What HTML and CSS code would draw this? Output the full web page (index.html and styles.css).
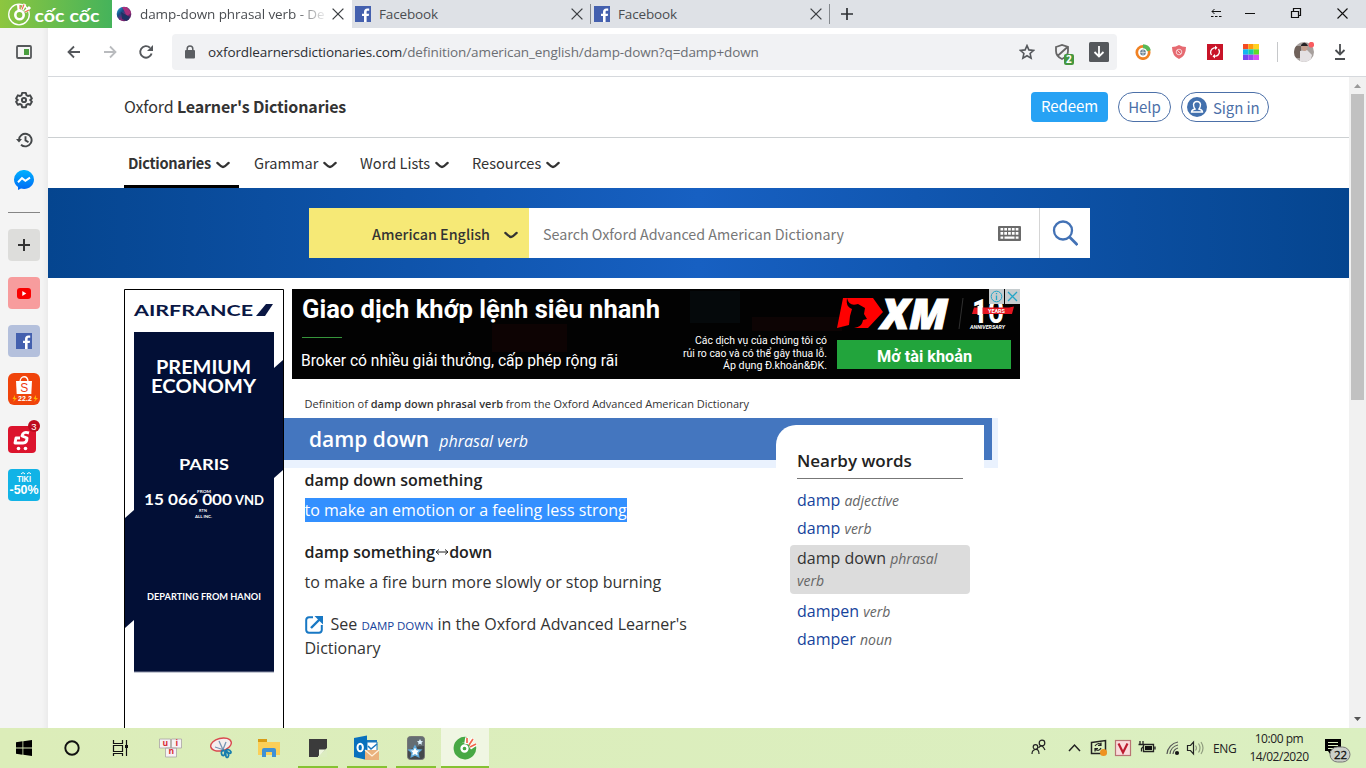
FILE: index.html
```html
<!DOCTYPE html>
<html lang="en">
<head>
<meta charset="utf-8">
<title>damp-down phrasal verb - Definition</title>
<link rel="stylesheet" href="styles.css">
</head>
<body>
<svg width="0" height="0" class="defs">
  <defs>
    <symbol id="close" viewBox="0 0 12 12"><path d="M.6.6 11.4 11.4M11.4.6.6 11.4" fill="none" stroke="#3c3f43" stroke-width="1.3"/></symbol>
    <symbol id="fb" viewBox="0 0 16 16"><path fill="#4460ae" d="M0 0h16v16H0z"/><path fill="#fff" d="M9 16V10H7V7.7h2V6c0-2.300 1.300-3.500 3.300-3.500h1.900v2.200h-1.300c-1 0-1.300.500-1.300 1.300v1.700h2.500l-.4 2.300h-2.100v6z"/></symbol>
    <symbol id="chev" viewBox="0 0 14 8"><path d="M1.500 2Q5.300 5.900 7 5.900T12.500 2" fill="none" stroke="#333" stroke-width="2.500" stroke-linecap="round"/></symbol>
    <linearGradient id="gMsg" x2="0" y2="1"><stop stop-color="#00b2ff"/><stop offset="1" stop-color="#0068f5"/></linearGradient>
    <linearGradient id="gOld" x2="1" y2="1"><stop stop-color="#30b5e8"/><stop offset=".35" stop-color="#174b83"/><stop offset=".6" stop-color="#8b2673"/><stop offset="1" stop-color="#2b205b"/></linearGradient>
  </defs>
</svg>

<header class="tabbar">
  <div class="brand">
    <svg width="112" height="28" viewBox="0 0 112 28">
      <circle cx="19" cy="14.500" r="10.300" fill="none" stroke="#fff" stroke-width="1.300"/>
      <circle cx="19.500" cy="15" r="4.200" fill="none" stroke="#fff" stroke-width="2.600"/>
      <path d="M19 10 18.500 4.500M22 10 25 4M25 12 30 7" stroke="#fff" stroke-width="3"/>
      <path d="M22 9.500 24 4.500M20 9V5M25 12 29 10" stroke="#ee6a4c" stroke-width="1.100"/>
      <text x="34.500" y="22" textLength="65" lengthAdjust="spacingAndGlyphs" class="brand-text">cốc cốc</text>
    </svg>
  </div>
  <div class="tab active">
    <svg class="fav" width="16" height="16" viewBox="0 0 16 16"><circle cx="8" cy="8" r="7.300" fill="url(#gOld)"/><path d="m6 1 5 0 4 6-4 3z" fill="#a9307c"/><path d="m5 6 9 5-3 4-5-2z" fill="#1d3264"/></svg>
    <span class="tab-title fade">damp-down phrasal verb - De</span>
    <svg class="x" width="12" height="12"><use href="#close"/></svg>
  </div>
  <div class="tab">
    <svg class="fav" width="16" height="16"><use href="#fb"/></svg><span class="tab-title">Facebook</span>
    <svg class="x" width="12" height="12"><use href="#close"/></svg>
  </div>
  <div class="tab">
    <svg class="fav" width="16" height="16"><use href="#fb"/></svg><span class="tab-title">Facebook</span>
    <svg class="x" width="12" height="12"><use href="#close"/></svg>
  </div>
  <svg class="newtab" width="12" height="12" viewBox="0 0 12 12"><path d="M6 0v12M0 6h12" stroke="#2e3134" stroke-width="1.700"/></svg>
  <div class="winctl">
    <svg width="160" height="28" viewBox="0 0 160 28" fill="none" stroke="#111">
      <path d="M12 11.500h9M14.500 9l-2.500 2.500 2.500 2.500"/><path d="M11 16.500h11" stroke-dasharray="2.500 1.500"/>
      <path d="M45 13.500h10"/>
      <path d="M91.500 11.500h7v6h-7zM93.500 11.500v-3h7v7h-2" stroke-width="1.200"/>
      <path d="m137.500 8.500 10 10M147.500 8.500l-10 10" stroke-width="1.100"/>
    </svg>
  </div>
</header>

<div class="window">
  <aside class="side">
    <svg class="tool" width="16" height="14" viewBox="0 0 16 14"><rect x="1" y="1" width="14" height="12" rx="1" fill="none" stroke="#55585a" stroke-width="1.800"/><path fill="#4a9e3f" d="M8 4h5v6H8z"/></svg>
    <svg class="tool gear" width="18" height="18" viewBox="0 0 24 24" fill="none" stroke="#444749" stroke-width="2.600" stroke-linejoin="round"><path d="M9.500 2.500h5l.7 3 2 1.200 3-.9 2.300 4.200-2.200 2 0 0 2.200 2.200-2.300 4.100-3-.9-2 1.200-.7 3h-5l-.7-3-2-1.200-3 .9L1.500 14.200 3.700 12 1.500 10l2.300-4.200 3 .9 2-1.200z"/><circle cx="12" cy="12" r="2.800"/></svg>
    <svg class="tool hist" width="17" height="16" viewBox="0 0 17 16" fill="none" stroke="#444749" stroke-width="1.900"><path d="M3 8a6.300 6.300 0 1 1 2 4.700M9.500 4.200V8.400l3 1.800"/><path d="M0 7h6L3 10.500z" fill="#444749" stroke="none"/></svg>
    <svg class="tool msg" width="20" height="20" viewBox="0 0 20 20"><path fill="url(#gMsg)" d="M10 0a9.700 9.700 0 0 1 10 9.500c0 5.500-4.800 9.600-10 9.500-1 0-2-.1-3-.4L4 20v-3C1.500 15.200 0 12.500 0 9.500A9.700 9.700 0 0 1 10 0z"/><path d="m4 12.300 4-4.200 3.400 2.700L16 7.700" fill="none" stroke="#fff" stroke-width="2"/></svg>
    <hr>
    <div class="tile grey"><svg width="12" height="12"><path d="M6 0v12M0 6h12" stroke="#333" stroke-width="2"/></svg></div>
    <div class="tile pink"><svg width="14" height="11"><rect width="14" height="11" rx="3" fill="#f90000"/><path d="m5.300 3 4 2.500-4 2.500z" fill="#fff"/></svg></div>
    <div class="tile bluish"><svg width="16" height="16"><use href="#fb"/></svg></div>
    <div class="tile shopee"><svg width="32" height="32"><path d="M8 8h16l-.7 13H8.700z" fill="#fff"/><path d="M12 9c0-7 8-7 8 0" fill="none" stroke="#fff" stroke-width="1.300"/><text x="12.300" y="19" font-size="12" fill="#ee3a12">S</text><text x="10" y="28" textLength="14" class="tiny-bold">22.2</text><path d="m7 22-2.500 4h2L5 29l4-4H7zM28 22l-2.500 4h2L26 29l4-4h-2z" fill="#ffb000"/></svg></div>
    <div class="tile sendo"><svg width="32" height="34"><rect y="7" width="28" height="27" rx="4" fill="#dc142d"/><path d="M21 14q-6-2-7 3l5 2q0 5-4 5H7l1-5h4" fill="none" stroke="#fff" stroke-width="2.900" stroke-linejoin="round"/><circle cx="10.500" cy="29.500" r="1.800" fill="#fff"/><circle cx="17.500" cy="29.500" r="1.800" fill="#fff"/><circle cx="26" cy="7" r="6" fill="#bd0b1e"/><text x="23.300" y="10.500" font-size="9.500" fill="#fff">3</text></svg></div>
    <div class="tile tiki"><svg width="32" height="32"><text x="9" y="13" textLength="14" lengthAdjust="spacingAndGlyphs" font-size="9.500" font-weight="700" fill="#fff">TIKI</text><path d="m13 5 2-1.500L17 5M19 5l2-1.500L23 5" fill="none" stroke="#fff"/><text x="1.500" y="25" textLength="29" lengthAdjust="spacingAndGlyphs" font-size="12" font-weight="700" fill="#fff">-50%</text></svg></div>
  </aside>

  <div class="browser">
    <div class="toolbar">
      <div class="cell"><svg width="14" height="14" viewBox="0 0 14 14"><path d="M13 7H2M7 1.500 1.500 7 7 12.500" fill="none" stroke="#55585c" stroke-width="1.800"/></svg></div>
      <div class="cell"><svg width="14" height="14" viewBox="0 0 14 14"><path d="M1 7h11M7 1.500 12.500 7 7 12.500" fill="none" stroke="#b9bbbe" stroke-width="1.800"/></svg></div>
      <div class="cell"><svg width="16" height="16" viewBox="0 0 16 16"><path d="M13.600 9.500A5.800 5.800 0 1 1 12 3.700" fill="none" stroke="#55585c" stroke-width="1.900"/><path d="M15 1v6H9z" fill="#55585c"/></svg></div>
      <div class="url">
        <svg width="12" height="14" viewBox="0 0 12 14"><rect x="1" y="5" width="10" height="8.500" rx="1" fill="#5b5e62"/><path d="M3.200 5.500V3.800a2.800 2.800 0 0 1 5.600 0v1.700" fill="none" stroke="#5b5e62" stroke-width="1.500"/></svg>
        <span class="address"><b>oxfordlearnersdictionaries.com</b>/definition/american_english/damp-down?q=damp+down</span>
        <div class="cell"><svg width="16" height="16" viewBox="0 0 16 16"><path d="m8 1.600 1.900 4.300 4.700.5-3.500 3.100 1 4.700L8 11.800l-4.100 2.400 1-4.700L1.400 6.400l4.700-.5z" fill="none" stroke="#55585c" stroke-width="1.600"/></svg></div>
        <div class="cell"><svg class="shield" width="22" height="24" viewBox="0 0 22 24"><path d="M3 4 9 2l6 2v4c0 4-2.500 6.500-6 8C5.500 14.500 3 12 3 8zM4.500 13 14.500 4" fill="none" stroke="#666" stroke-width="1.800"/><rect x="11" y="11" width="10" height="11" rx="2" fill="#45973f"/><text x="13" y="20.300" font-size="10" font-weight="700" fill="#fff">2</text></svg></div>
        <div class="cell"><svg width="20" height="20"><rect width="20" height="20" rx="1.500" fill="#55585c"/><path d="M10 4v10M5.500 10l4.500 4.500L14.500 10" fill="none" stroke="#fff" stroke-width="1.800"/></svg></div>
      </div>
      <div class="cell first"><svg width="16" height="16" viewBox="0 0 16 16"><circle cx="8" cy="8.500" r="6.200" fill="none" stroke="#f08224" stroke-width="2.700"/><path d="M8 2.200a6.200 6.200 0 0 1 5.900 4.500" fill="none" stroke="#58b957" stroke-width="4"/><circle cx="8" cy="8.500" r="2.900" fill="#6d8698"/><path d="M8 5.600v5.800M5.200 8.500h5.600" stroke="#d8dee2" stroke-width=".8"/></svg></div>
      <div class="cell"><svg width="14" height="14"><path d="M7 0q3 2 7 2Q14 11 7 14 0 11 0 2 4 2 7 0z" fill="#e66a71"/><circle cx="7" cy="7" r="2.800" fill="none" stroke="#f7cfd2"/><path d="m5 5 4 4" stroke="#f7cfd2"/></svg></div>
      <div class="cell"><svg width="16" height="16"><path fill="#c81428" d="M0 0h16v16H0z"/><path d="M4.500 11a4.600 4.600 0 0 1 2.500-7.200h2M11.500 5A4.600 4.600 0 0 1 9 12.200H7" fill="none" stroke="#fff" stroke-width="1.300"/><path d="M8 1.600 10.500 3.800 8 6zM8 10v4.400L5.500 12.200z" fill="#fff"/></svg></div>
      <div class="cell"><svg width="16" height="16"><path fill="#f44b23" d="M0 0h5.300v5.300H0z"/><path fill="#ff9a0a" d="M5.300 0h5.400v5.300H5.300z"/><path fill="#ffd21f" d="M10.700 0H16v5.300h-5.300z"/><path fill="#12b8ef" d="M0 5.300h5.300v5.400H0z"/><path fill="#15cda3" d="M5.300 5.300h5.400v5.400H5.300z"/><path fill="#63d928" d="M10.700 5.300H16v5.400h-5.300z"/><path fill="#7447f0" d="M0 10.700h5.300V16H0z"/><path fill="#9b45f1" d="M5.300 10.700h5.400V16H5.300z"/><path fill="#d74cf6" d="M10.700 10.700H16V16h-5.300z"/></svg></div>
      <i class="vsep"></i>
      <div class="cell"><svg width="20" height="20" viewBox="0 0 20 20"><clipPath id="av"><circle cx="10" cy="10" r="10"/></clipPath><g clip-path="url(#av)"><path fill="#a7a09d" d="M0 0h20v20H0z"/><path fill="#70625b" d="M0 4h7v12H0z"/><path fill="#e4e1e3" d="m6 9 7-1 5 5-2 7H6z"/><ellipse cx="10.500" cy="5" rx="3" ry="4" fill="#c49f8e"/><path fill="#252326" d="M7 3q4-5 7 1H7z"/></g><circle cx="17.300" cy="2.700" r="2.800" fill="#fa5c60"/></svg></div>
      <div class="cell"><svg width="12" height="16"><path d="M6 0v10M1.500 6 6 10.500 10.500 6M1 15h10" fill="none" stroke="#4a4d50" stroke-width="1.800"/></svg></div>
    </div>

    <div class="viewport">
      <main class="page">
        <div class="masthead">
          <div class="logo">Oxford <b>Learner's Dictionaries</b></div>
          <span class="btn redeem">Redeem</span>
          <span class="btn pill help">Help</span>
          <span class="btn pill sign"><svg width="20" height="20"><circle cx="10" cy="10" r="10" fill="#4270ad"/><path d="M4.500 15q0-2.200 3.500-3-1.500-2-1.500-4.500Q7 4.500 10 4.500t3.500 3Q13.500 10 12 12q3.500.800 3.500 3z" fill="none" stroke="#fff" stroke-width="1.400"/></svg>Sign in</span>
        </div>
        <nav class="menu">
          <a class="on">Dictionaries<svg width="14" height="8"><use href="#chev"/></svg></a>
          <a class="m2">Grammar<svg width="14" height="8"><use href="#chev"/></svg></a>
          <a class="m3">Word Lists<svg width="14" height="8"><use href="#chev"/></svg></a>
          <a class="m4">Resources<svg width="14" height="8"><use href="#chev"/></svg></a>
        </nav>
        <section class="search">
          <div class="lang">American English<svg width="14" height="8"><use href="#chev"/></svg></div>
          <div class="field"><span>Search Oxford Advanced American Dictionary</span>
            <svg width="23" height="15" viewBox="0 0 23 15"><rect width="23" height="15" rx="1" fill="#6a6a6a"/><path d="M2.500 3.300h18M2.500 7.400h18" stroke="#fff" stroke-width="2.600" stroke-dasharray="2.700 1.100"/><path d="M2.500 11.600h2.700M6.500 11.600h10M17.700 11.600h2.800" stroke="#fff" stroke-width="2.200"/></svg>
          </div>
          <div class="go"><svg width="26" height="26" viewBox="0 0 26 26"><circle cx="11" cy="10.500" r="9" fill="none" stroke="#4372b5" stroke-width="2.300"/><path d="m17.500 17 8 8" stroke="#4372b5" stroke-width="2.800"/></svg></div>
        </section>
        <div class="body">
          <svg class="skyscraper" width="160" height="439" viewBox="0 0 160 439">
            <path d="M.5 439V.5h159V439" fill="#fff" stroke="#000"/>
            <path fill="#020f36" d="M10 43h140v36l9-8v110l-9 8v194H10v-52l-9 8V229l9-8z"/>
            <path d="M10 383h140" stroke="#8c93a8"/>
            <g fill="#0a1744" font-weight="700" class="air"><text x="10" y="27" font-size="16" textLength="119" lengthAdjust="spacingAndGlyphs">AIRFRANCE</text></g>
            <path d="m132 27 10-12h7l-8 12z" fill="#0a1744"/>
            <g fill="#fff" class="air" font-weight="700">
              <text x="32" y="84.500" font-size="19" textLength="95" lengthAdjust="spacingAndGlyphs">PREMIUM</text>
              <text x="27" y="103.500" font-size="19" textLength="105" lengthAdjust="spacingAndGlyphs">ECONOMY</text>
              <text x="55" y="181" font-size="15.500" textLength="50" lengthAdjust="spacingAndGlyphs">PARIS</text>
              <text x="20" y="216" font-size="16" textLength="88" lengthAdjust="spacingAndGlyphs">15 066 000</text>
              <text x="111" y="216" font-size="12.500" textLength="29" lengthAdjust="spacingAndGlyphs">VND</text>
              <text x="23" y="311" font-size="9.500" textLength="114" lengthAdjust="spacingAndGlyphs">DEPARTING FROM HANOI</text>
              <g font-size="3.800"><text x="73" y="203.500" textLength="14" lengthAdjust="spacingAndGlyphs">FROM</text><text x="75" y="223" textLength="8">RTN</text><text x="71" y="228.500" textLength="17" lengthAdjust="spacingAndGlyphs">ALL INC.</text></g>
            </g>
          </svg>
          <div class="column">
            <svg class="banner" width="728" height="90" viewBox="0 0 728 90">
              <path fill="#020202" d="M0 0h728v90H0z"/>
              <path d="M200 35h75v28h-75z" fill="#0d0303"/><path d="M398 2h50v32h-50z" fill="#05090b"/><path d="M460 28h90v14h-90z" fill="#0d0404"/>
              <g class="roboto" fill="#fff">
                <text x="10" y="28.500" font-size="26" font-weight="700" textLength="358" lengthAdjust="spacingAndGlyphs">Giao dịch khớp lệnh siêu nhanh</text>
                <text x="9" y="77" font-size="16" textLength="317" lengthAdjust="spacingAndGlyphs">Broker có nhiều giải thưởng, cấp phép rộng rãi</text>
                <g font-size="11.500"><text x="403" y="55" textLength="132" lengthAdjust="spacingAndGlyphs">Các dịch vụ của chúng tôi có</text><text x="391" y="68" textLength="144" lengthAdjust="spacingAndGlyphs">rủi ro cao và có thể gây thua lỗ.</text><text x="431" y="80" textLength="104" lengthAdjust="spacingAndGlyphs">Áp dụng Đ.khoản&amp;ĐK.</text></g>
              </g>
              <path d="M10 48.500h40" stroke="#36953b"/>
              <path d="M551 9h30l10 14-15 16h-14c6-1 8-3 9-8l4-1-3-5 1-6-7-4q-9 3-11-6c-1 7 1 9 5 11l-2 7-1 9-12 3z" fill="#f00"/>
              <g font-style="italic" font-weight="700" fill="#fff"><text class="xm" x="589" y="39.500" font-size="42" textLength="67" lengthAdjust="spacingAndGlyphs" stroke="#fff" stroke-width="1">XM</text></g>
              <path d="m671 9-4 31" stroke="#303030"/>
              <text class="roboto" x="680" y="34" font-size="34" font-weight="700" fill="#fff" textLength="32" lengthAdjust="spacingAndGlyphs">10</text>
              <path fill="#e51520" d="M682 18.500h35l5-1-2 7.500h-40z"/><path d="M688 17v9" stroke="#fff" stroke-width="5"/><text class="roboto" x="696" y="24" font-size="5.500" font-weight="700" fill="#fff" textLength="17">YEARS</text>
              <text class="roboto" x="678" y="40" font-size="5" font-weight="700" font-style="italic" fill="#fff" textLength="35" lengthAdjust="spacingAndGlyphs">ANNIVERSARY</text>
              <path fill="#22a43c" d="M545 51h174v29H545z"/>
              <text class="roboto" x="585" y="73" font-size="17" font-weight="700" fill="#fff" textLength="95" lengthAdjust="spacingAndGlyphs">Mở tài khoản</text>
              <path fill="#c6cdcf" d="M697 0h15v15h-15zM713 0h15v15h-15z"/>
              <circle cx="704.500" cy="7.500" r="5.300" fill="none" stroke="#24a5c7"/><path d="M704.500 6.500v4.500M704.500 4v1.300" stroke="#24a5c7" stroke-width="1.300"/><path d="m716 3 9 9M725 3l-9 9" stroke="#24a5c7" stroke-width="1.300"/>
            </svg>
            <p class="defn">Definition of <b>damp down phrasal verb</b> from the Oxford Advanced American Dictionary</p>
            <div class="entry">
              <div class="left">
                <h1>damp down<em>phrasal verb</em></h1>
                <h2>damp down something</h2>
                <p class="gloss"><mark>to make an emotion or a feeling less strong</mark></p>
                <h2 class="second">damp something<svg width="14" height="8" viewBox="0 0 14 8"><path d="M1 4h12M4 1.500 1 4l3 2.500M10 1.500 13 4l-3 2.500" fill="none" stroke="#222"/></svg>down</h2>
                <p class="gloss g2">to make a fire burn more slowly or stop burning</p>
                <p class="see"><svg width="18" height="18" viewBox="0 0 18 18"><path d="M8 1.300H4A3 3 0 0 0 1.200 4v10A3 3 0 0 0 4 16.800h10a3 3 0 0 0 2.800-2.800V9" fill="none" stroke="#1878c4" stroke-width="2"/><path d="m6 12 9-9" stroke="#1878c4" stroke-width="2.400"/><path d="M9.500 0H18v8.500z" fill="#1878c4"/></svg>See <a>DAMP DOWN</a> in the Oxford Advanced Learner's<br>Dictionary</p>
              </div>
              <div class="nearby">
                <h3>Nearby words</h3>
                <ul>
                  <li>damp <em>adjective</em></li>
                  <li>damp <em>verb</em></li>
                  <li class="cur">damp down <em>phrasal<br>verb</em></li>
                  <li>dampen <em>verb</em></li>
                  <li>damper <em>noun</em></li>
                </ul>
              </div>
            </div>
          </div>
        </div>
      </main>
      <div class="scroll">
        <svg width="7" height="4"><path d="m0 4 3.500-4L7 4z" fill="#999"/></svg>
        <i></i>
        <svg class="down" width="7" height="4"><path d="m0 0 3.500 4L7 0z" fill="#555"/></svg>
      </div>
    </div>
  </div>
</div>

<footer class="taskbar">
  <div class="t w48"><svg width="16" height="16"><path fill="#000" d="m0 2.300 6.500-1v6.300H0zM7.300 1.200 16 0v7.600H7.300zM0 8.400h6.500v6.300L0 13.700zM7.300 8.400H16V16l-8.700-1.200z"/></svg></div>
  <div class="t w48"><svg width="16" height="16"><circle cx="8" cy="8" r="6.700" fill="none" stroke="#111" stroke-width="1.900"/></svg></div>
  <div class="t w48"><svg width="17" height="16" viewBox="0 0 17 16" fill="none" stroke="#111" stroke-width="1.200"><path d="M1.500 0v3.500h9V0M1.500 5.500h9v6h-9zM1.500 16v-2.500h9V16M14.500 0v16"/><path d="M13 5h3v3h-3z" fill="#111" stroke="none"/></svg></div>
  <div class="t w53"><svg width="24" height="20" viewBox="0 0 24 20"><g fill="#f6f2f4" stroke="#a9a5a5" stroke-width=".8"><path d="M.5 1h11v9h-11zM12.500 1h10v9h-10zM6.500 10h11v9h-11z"/></g><g fill="#d82b35" font-size="8.500" font-weight="700"><text x="3.500" y="7.500">u</text><text x="16.500" y="7.500">i</text><text x="9.500" y="16">n</text></g></svg></div>
  <div class="t w48"><svg width="24" height="22"><ellipse cx="12" cy="7.500" rx="10.500" ry="6.200" fill="#f5eeee" stroke="#d9484e" stroke-width="1.400" transform="rotate(-14 12 7.500)"/><path d="M10 4l5 11M17 5l-4 10M6 10l9 3" stroke="#7894b2" stroke-width="1.300"/><path d="M15 13q-4 1-2 5 3 2 3-4 4-3 6 1 0 3-5-1 4 3 2 6-3 2-2-6" fill="none" stroke="#167dae" stroke-width="1.700"/></svg></div>
  <div class="t w48"><svg width="22" height="20"><path fill="#d99b14" d="M0 1h9v5H0z"/><path fill="#fbcf58" d="M0 4h22v13H0z"/><path fill="#3f91d5" d="M4 19v-7q0-2 2-2h10q2 0 2 2v7h-4v-5H8v5z"/></svg></div>
  <div class="t run"><svg width="18" height="18"><path fill="#3b3b3b" d="M0 0h18v18H0z"/><path fill="#dcedc0" d="M9 18v-1l8-8h1v9z"/><path fill="#3b3b3b" d="M9 17V9h9z"/><path fill="#eef6dd" d="M10 10.500h6.500L10 17z"/></svg></div>
  <div class="t run"><svg width="26" height="26" viewBox="0 0 26 26"><path fill="#1b78bd" d="M13 5h10v11H13z"/><path d="M13 7h10v10H13z" fill="#fff" stroke="#1b78bd"/><path d="m14 11 3 3 6-5" fill="none" stroke="#1b78bd" stroke-width="1.500"/><path fill="#0870bd" d="m0 3 13-2.500V25L0 22z"/><ellipse cx="6.200" cy="12.500" rx="2.700" ry="3.800" fill="none" stroke="#fff" stroke-width="2"/><path fill="#eab27d" d="M11 15h14v10H11z"/><path d="m11 15 7 6 7-6" fill="none" stroke="#fff1dc" stroke-width="1.300"/></svg></div>
  <div class="t run"><svg width="18" height="24"><rect x=".5" y=".5" width="17" height="23" rx="3" fill="#44494c" stroke="#777"/><path fill="#79868e" d="M1 15Q7 10 17 10V3q0-2-2-2H3Q1 1 1 3z" opacity=".6"/><path d="m8 10 1.900 3.600 4 .5-3 2.700.8 4L8 18.800l-3.700 2 .8-4-3-2.700 4-.5z" fill="#fff" stroke="#5da9dc" stroke-width="1.400"/><path d="m13 3 1 2 2 .3-1.500 1.500.4 2-1.900-1-1.900 1 .4-2L10 5.300l2-.3z" fill="#dff3ff"/></svg></div>
  <div class="t run live"><svg width="24" height="24" viewBox="0 0 24 24"><path d="M14 1A11.300 11.300 0 1 0 23 10L18 12A6 6 0 1 1 12 6z" fill="#48a845"/><circle cx="11.500" cy="13" r="6.800" fill="#48a845"/><circle cx="11.500" cy="12.500" r="3" fill="none" stroke="#fff" stroke-width="2.300"/><path d="M13 8 14 1.500M16 9l4-6.500M17 12l6-4" stroke="#fff" stroke-width="3.600"/><path d="M14 7V2M16 9l4-6M17 11l6-3" stroke="#f1664c" stroke-width="1.700"/></svg></div>
  <div class="tray">
    <svg width="180" height="24" viewBox="0 0 180 24" fill="none" stroke="#222" stroke-width="1.200">
      <circle cx="12" cy="7" r="2.800"/><circle cx="5.500" cy="11" r="2.300"/><path d="M2 18q0-4 3.500-4.500T9 18M8.500 12q3.500-5 6.500 2"/>
      <path d="m39 15 5.500-6 5.500 6" stroke-width="1.500"/>
      <path d="m61.500 6.500 14-2v13h-14z" stroke-width="1.500"/><path d="M65 10q3-4 6-1M71 12q-2 4-6 1M71 6.500v3h-3M65 15.500v-3h3"/><circle cx="73.500" cy="16.500" r="3.500" fill="#ee9220" stroke="none"/>
      <rect x="85.500" y="4.500" width="15" height="15" fill="#fadbdc" stroke="#b97373"/><path d="m88.500 7.500 4.500 9 4.500-9" stroke="#bc1c30" stroke-width="2.200"/>
      <path d="M113.500 8.500h10v7h-10zM125 10.500v3M110 5v3.500M113 5v3.500M108.500 8.500h5v2l-2 2v3" stroke-width="1.300"/><path d="M115 10h7v4h-7z" fill="#111" stroke="none"/>
      <path d="M137 18a13 13 0 0 1 11-12M140 18a10 10 0 0 1 8-9M143 18a7 7 0 0 1 5-6" stroke="#555"/><circle cx="147" cy="17" r="1.500" fill="#111"/>
      <path d="M157.500 9.500h3l3-3.500v12l-3-3.500h-3z"/><path d="M165.500 9.500q2 2.500 0 5M168.500 7.500q3 4.500 0 9M171 6q4 6 0 12" stroke="#8f9c7e"/>
    </svg>
    <span class="eng">ENG</span>
    <div class="clock"><span>10:00 pm</span><span>14/02/2020</span></div>
    <svg class="notif" width="28" height="26" viewBox="0 0 28 26"><path fill="#000" d="M0 1h16v12H5v3l-2-3H0z"/><path d="M3 4.500h10M3 7.500h10M3 10.500h7" stroke="#dcedc0"/><rect x="5" y="9" width="20" height="15" rx="7.500" fill="#cbcfc9" stroke="#777"/><text x="9" y="20.500" font-size="11.500" fill="#111" stroke="#111" stroke-width=".3" textLength="13">22</text></svg>
  </div>
</footer>
</body>
</html>
```

FILE: styles.css
```css
* { box-sizing: border-box; }
body { margin: 0; width: 1366px; height: 768px; overflow: hidden; display: flex; flex-direction: column; background: #fff; font-family: "Open Sans", sans-serif; color: #333; }
svg { display: block; flex: none; }
.defs { position: absolute; }
h1, h2, h3, p, ul { margin: 0; padding: 0; }

.tabbar { height: 28px; flex: none; display: flex; background: #dee1e6; }
.brand { width: 112px; background: linear-gradient(90deg, #8dc63f, #45b35b); }
.brand-text { font: 700 17px Lato, sans-serif; fill: #fff; }
.tab { width: 239px; display: flex; align-items: center; padding: 0 8px 0 4px; position: relative; font-size: 13.5px; letter-spacing: -.15px; color: #4a4d51; }
.tab:not(.active)::after { content: ""; position: absolute; right: 0; top: 4px; height: 20px; width: 1px; background: #85898e; }
.tab:not(.active) { padding-left: 3px; }
.tab.active { width: 240px; background: #fff; }
.tab-title { flex: 1; margin-left: 8px; line-height: 28px; white-space: nowrap; overflow: hidden; }
.tab .x { margin-left: 8px; }
.fade { -webkit-mask-image: linear-gradient(90deg, #000 155px, transparent 188px); mask-image: linear-gradient(90deg, #000 155px, transparent 188px); letter-spacing: -.08px; }
.newtab { margin: 8px 0 0 11px; }
.winctl { margin-left: auto; width: 166px; }

.window { height: 700px; display: flex; }
.side { width: 48px; flex: none; background: linear-gradient(90deg, #f4f4f4 42px, #ebebeb); display: flex; flex-direction: column; align-items: center; padding-top: 17px; }
.gear { margin-top: 32px; }
.hist { margin-top: 23px; }
.msg { margin-top: 22px; }
.side hr { width: 32px; margin: 22px 0 16px; border: 0; border-top: 1px solid #858585; height: 1px; }
.tile { width: 32px; height: 32px; border-radius: 4px; display: flex; align-items: center; justify-content: center; margin-bottom: 16px; flex: none; font-family: "Liberation Sans", sans-serif; }
.grey { background: #dddddb; }
.pink { background: #f79c9d; }
.bluish { background: #b4c0dc; }
.shopee { background: #f0440b; border-radius: 6px; }
.tiny-bold { font-size: 7px; font-weight: 700; fill: #fff; }
.sendo { height: 34px; margin-top: -2px; overflow: visible; }
.sendo svg { overflow: visible; }
.tiki { background: #12b3e6; }

.browser { flex: 1; display: flex; flex-direction: column; }
.toolbar { height: 49px; flex: none; border-bottom: 1px solid #d6d9dd; display: flex; align-items: center; padding-left: 8px; }
.cell { width: 36px; flex: none; display: flex; justify-content: center; align-items: center; }
.cell.first { margin-left: 8px; }
.shield { margin: 6px 0 0 2px; }
.url { margin-left: 8px; width: 945px; height: 36px; border-radius: 4px; background: #f1f2f4; display: flex; align-items: center; padding-left: 12px; }
.address { flex: 1; margin-left: 12px; font-size: 13.5px; letter-spacing: -.1px; color: #6b6e73; }
.address b { color: #2c2f33; font-weight: 400; }
.vsep { width: 1px; height: 20px; margin: 0 8px; background: #c6c8ca; }

.viewport { flex: 1; display: flex; }
.page { width: 1301px; height: 651px; overflow: hidden; }
.scroll { width: 17px; background: #f1f1f1; display: flex; flex-direction: column; align-items: center; padding: 7px 0; }
.scroll i { width: 13px; height: 306px; margin-top: 6px; background: #c1c1c1; }
.scroll .down { margin-top: auto; }

.masthead { height: 61px; border-bottom: 1px solid #ccd0d2; display: flex; align-items: center; padding: 0 80px 0 76px; font-family: "Noto Sans CJK SC", sans-serif; font-size: 15px; }
.logo { flex: 1; line-height: 24px; font-size: 16px; letter-spacing: -.14px; margin-top: -2px; }
.logo b { font-weight: 600; }
.btn { height: 30px; line-height: 28px; border-radius: 4px; text-align: center; letter-spacing: -.1px; }
.redeem { width: 77px; background: #27a2f4; color: #fff; }
.pill { border: 1px solid #4c70a8; border-radius: 15px; color: #4c70a8; margin-left: 10px; line-height: 27px; }
.help { width: 53px; }
.sign { width: 88px; display: flex; align-items: center; padding-left: 5px; gap: 6px; }
.menu { height: 50px; padding-left: 76px; display: flex; font-family: "Noto Sans CJK SC", sans-serif; font-size: 14.6px; line-height: 50px; }
.menu a { display: flex; align-items: center; gap: 5px; white-space: nowrap; }
.menu a.on { width: 115px; padding: 3px 0 0 4px; border-bottom: 3px solid #000; font-weight: 700; height: 50px; letter-spacing: -.3px; }
.menu .m2 { width: 106px; margin-left: 15px; }
.menu .m3 { width: 112px; }
.menu svg { margin-top: 3px; }
.search { height: 90px; padding: 20px 0 0 261px; background: linear-gradient(90deg, #05458f, #1760c2 50%, #05458f); display: flex; font-family: "Noto Sans CJK SC", sans-serif; font-size: 14.3px; }
.lang { width: 220px; height: 50px; background: #f6e976; display: flex; align-items: center; justify-content: flex-end; gap: 14px; padding-right: 11px; font-weight: 500; color: #333; }
.lang svg { margin-top: 4px; }
.field { width: 510px; height: 50px; background: #fff; display: flex; align-items: center; justify-content: space-between; padding: 0 18px 0 14px; color: #777; }
.go { width: 51px; height: 50px; background: #fff; border-left: 1px solid #d5d5d5; display: flex; align-items: center; justify-content: center; }

.body { display: flex; padding: 11px 0 0 76px; }
.column { width: 736px; }
.banner { margin-left: 8px; }
.air { font-family: Lato, sans-serif; }
.roboto { font-family: Roboto, sans-serif; }
.xm { font-family: "Open Sans", sans-serif; font-weight: 800; }
.defn { padding: 17px 0 0 20.5px; font-size: 11px; line-height: 16px; height: 39px; }
.defn b { font-weight: 600; }
.entry { width: 714px; height: 50px; background: #eaf2fe; display: flex; box-shadow: inset -6px -8px #eaf2fe, inset 0 0 0 50px #4476bf; }
.left { width: 492px; font-size: 16px; line-height: 24px; white-space: nowrap; }
.left h1 { height: 42px; padding-left: 25px; font-size: 21px; line-height: 43px; font-weight: 600; color: #fff; }
.left h1 em { font-size: 16px; font-weight: 400; margin-left: 10px; }
.left h2 { margin: 8px 0 0 20.5px; font-size: 16px; font-weight: 600; line-height: 24px; color: #222; }
.left .second { margin-top: 18px; display: flex; align-items: center; }
.gloss { margin: 6px 0 0 20.5px; height: 24px; }
mark { display: inline-block; height: 24px; background: #3390ff; color: #fff; }
.see { margin: 18px 0 0 20.5px; }
.see svg { display: inline-block; vertical-align: top; margin: 4px 8px 0 0; }
.see a { color: #16439c; font-size: 11.5px; line-height: 1; letter-spacing: -.05px; }
.nearby { width: 208px; height: 300px; margin-top: 7px; flex: none; background: #fff; border-radius: 20px 0 0; padding: 22px 14px 0; font-size: 16px; }
.nearby h3 { margin: 0 7px 7px; height: 32px; border-bottom: 1px solid #777; font-size: 17px; line-height: 28px; font-weight: 600; color: #222; }
.nearby ul { list-style: none; }
.nearby li { height: 28px; padding: 3px 7px; line-height: 22px; color: #16439c; white-space: nowrap; }
.nearby em { font-size: 14px; line-height: 20px; color: #666; }
.nearby .cur { width: 180px; height: 49px; margin: 3px 0; padding-top: 2px; background: #dcdcdc; color: #333; border-radius: 4px; }

.taskbar { height: 40px; flex: none; display: flex; background: linear-gradient(90deg, #dcedb9, #dbefc1); font-family: "Open Sans", sans-serif; }
.t { height: 40px; display: flex; align-items: center; justify-content: center; flex: none; }
.w48 { width: 48px; }
.w53 { width: 53px; }
.run { width: 40px; margin-right: 9px; border-bottom: 2px solid #86c232; padding-top: 2px; }
.w48 + .run { margin-left: 5px; }
.live { width: 48px; margin: 0 0 0 -4px; background: #f0f6e3; }
.tray { margin-left: auto; width: 336px; flex: none; display: flex; align-items: center; color: #222; }
.eng { margin-left: 3px; width: 24px; font-size: 12px; letter-spacing: -.3px; }
.clock { width: 60px; margin-left: 12px; font-size: 12px; line-height: 18px; display: flex; flex-direction: column; align-items: center; letter-spacing: -.45px; white-space: nowrap; }
.notif { margin: 5px 8px 0 16px; }
```
